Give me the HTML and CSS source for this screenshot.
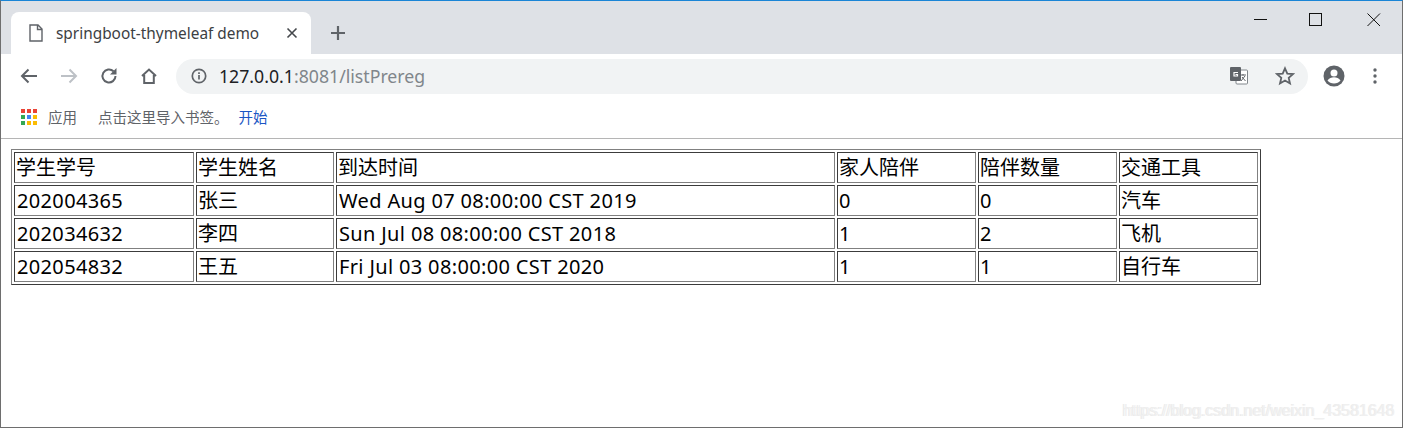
FILE: index.html
```html
<!DOCTYPE html>
<html lang="zh-CN">
<head>
<meta charset="utf-8">
<title>springboot-thymeleaf demo</title>
<link rel="stylesheet" href="styles.css">
</head>
<body>
<div class="window">
  <header class="tabstrip">
    <div class="tab">
      <svg class="tab-icon" width="14" height="18" viewBox="0 0 14 18"><path d="M1 1h8l4 4v12H1z M8.500 1v4.500H13" fill="none" stroke="#5f6368" stroke-width="1.400"/></svg>
      <span class="tab-title">springboot-thymeleaf demo</span>
      <svg class="tab-close" width="12" height="12" viewBox="0 0 12 12"><path d="M1.500 1.500l9 9M10.500 1.500l-9 9" stroke="#45484c" stroke-width="1.600"/></svg>
    </div>
    <svg class="new-tab" width="16" height="16" viewBox="0 0 16 16"><path d="M8 1v14M1 8h14" stroke="#5f6368" stroke-width="2.200"/></svg>
    <div class="win-controls">
      <svg class="win-min" width="14" height="14" viewBox="0 0 14 14"><path d="M0 6.500h13" stroke="#111" stroke-width="1"/></svg>
      <svg class="win-max" width="14" height="14" viewBox="0 0 14 14"><rect x=".5" y=".5" width="12" height="12" fill="none" stroke="#111" stroke-width="1"/></svg>
      <svg width="14" height="14" viewBox="0 0 14 14"><path d="M.5.500l12.500 12.500M13 .5L.5 13" stroke="#111" stroke-width="1"/></svg>
    </div>
  </header>
  <nav class="toolbar">
    <svg class="nav" width="18" height="16" viewBox="0 0 18 16"><path d="M17 8H2M8.500 1.500L2 8l6.500 6.500" fill="none" stroke="#5f6368" stroke-width="2"/></svg>
    <svg class="nav" width="18" height="16" viewBox="0 0 18 16"><path d="M1 8h15M9.500 1.500L16 8l-6.500 6.500" fill="none" stroke="#bdc1c6" stroke-width="2"/></svg>
    <svg class="nav" width="18" height="18" viewBox="0 0 18 18"><path d="M15.500 9a6.500 6.500 0 1 1-2-4.700" fill="none" stroke="#5f6368" stroke-width="2"/><path d="M16.500 1v6.500H10z" fill="#5f6368"/></svg>
    <svg class="nav" width="18" height="18" viewBox="0 0 18 18"><path d="M2 9l7-6.500L16 9M4.200 8v8h9.600V8" fill="none" stroke="#5f6368" stroke-width="2"/></svg>
    <div class="omnibox">
      <svg class="info" width="16" height="16" viewBox="0 0 16 16"><circle cx="8" cy="8" r="6.700" fill="none" stroke="#5f6368" stroke-width="1.700"/><path d="M8 7v4.500M8 4.300v1.700" stroke="#5f6368" stroke-width="1.700"/></svg>
      <span class="url"><span class="host">127.0.0.1</span>:8081/listPrereg</span>
      <svg class="translate" width="20" height="20" viewBox="0 0 20 20"><rect x="7" y="4" width="11.500" height="14" rx="1" fill="#fff" stroke="#80868b"/><rect x="1" y="1" width="11" height="14" rx="1" fill="#5f6368"/><path d="M9 6.500H5v3.500h3.500v-1.500H6.500" fill="none" stroke="#fff" stroke-width="1.200"/><path d="M11 9h6M14 8v1.500M12 15l4-5M13 11l3.500 4" fill="none" stroke="#5f6368"/></svg>
      <svg class="star" width="20" height="20" viewBox="0 0 20 20"><path d="M10 2.300l2.300 5.300 5.700.5-4.300 3.800 1.300 5.600-5-3-5 3 1.300-5.600L2 8.100l5.700-.5z" fill="none" stroke="#5f6368" stroke-width="1.800"/></svg>
    </div>
    <svg class="avatar" width="22" height="22" viewBox="0 0 22 22"><circle cx="11" cy="11" r="10.500" fill="#5f6368"/><circle cx="11" cy="8" r="3.500" fill="#fff"/><path d="M4.500 15.500c1.500-2.500 4-3.200 6.500-3.200s5 .7 6.500 3.200c-1.500 2-3.800 3-6.500 3s-5-1-6.500-3z" fill="#fff"/></svg>
    <svg class="menu" width="4" height="16" viewBox="0 0 4 16"><circle cx="2" cy="2" r="1.700" fill="#5f6368"/><circle cx="2" cy="8" r="1.700" fill="#5f6368"/><circle cx="2" cy="14" r="1.700" fill="#5f6368"/></svg>
  </nav>
  <div class="bookmarks">
    <svg class="apps" width="18" height="18" viewBox="0 0 18 18">
      <rect x="1" y="1" width="4" height="4" fill="#ea4335"/><rect x="7" y="1" width="4" height="4" fill="#ea4335"/><rect x="13" y="1" width="4" height="4" fill="#ea4335"/>
      <rect x="1" y="7" width="4" height="4" fill="#34a853"/><rect x="7" y="7" width="4" height="4" fill="#4285f4"/><rect x="13" y="7" width="4" height="4" fill="#fbbc04"/>
      <rect x="1" y="13" width="4" height="4" fill="#34a853"/><rect x="7" y="13" width="4" height="4" fill="#fbbc04"/><rect x="13" y="13" width="4" height="4" fill="#fbbc04"/>
    </svg>
    <span class="bm bm-apps">应用</span>
    <span class="bm bm-hint">点击这里导入书签。</span>
    <span class="bm bm-link">开始</span>
  </div>
  <main class="page">
    <table class="data">
      <colgroup>
        <col class="c1"><col class="c2"><col class="c3"><col class="c4"><col class="c5"><col class="c6">
      </colgroup>
      <tr><td>学生学号</td><td>学生姓名</td><td>到达时间</td><td>家人陪伴</td><td>陪伴数量</td><td>交通工具</td></tr>
      <tr><td class="en">202004365</td><td>张三</td><td class="en">Wed Aug 07 08:00:00 CST 2019</td><td>0</td><td>0</td><td>汽车</td></tr>
      <tr><td class="en">202034632</td><td>李四</td><td class="en">Sun Jul 08 08:00:00 CST 2018</td><td>1</td><td>2</td><td>飞机</td></tr>
      <tr><td class="en">202054832</td><td>王五</td><td class="en">Fri Jul 03 08:00:00 CST 2020</td><td>1</td><td>1</td><td>自行车</td></tr>
    </table>
    <div class="watermark">https://blog.csdn.net/weixin_43581648<span class="wm-ghost">https://blog.csdn.net/weixin_43581646</span></div>
  </main>
</div>
</body>
</html>
```
FILE: styles.css
```css
html, body { margin: 0; padding: 0; background: #fff; }
body { font-family: "Noto Sans", "Noto Sans CJK SC", sans-serif; overflow: hidden; }
.window {
  width: 1403px; height: 428px; box-sizing: border-box;
  border: 1px solid #6e6e6e; border-top: 1px solid #1a85d6;
  display: flex; flex-direction: column; overflow: hidden;
}
.tabstrip {
  height: 53px; background: #dee1e6; display: flex; align-items: flex-end; flex: none;
  padding-left: 10px; position: relative;
}
.tab {
  width: 300px; height: 42px; background: #fff; border-radius: 8px 8px 0 0;
  display: flex; align-items: center; box-sizing: border-box; padding: 0 13px 0 18px;
}
.tab-icon { margin-right: 13px; flex: none; }
.tab-title { font-size: 15.400px; color: #3c4043; flex: 1; white-space: nowrap; font-family: "Noto Sans", sans-serif; }
.tab-close { flex: none; }
.new-tab { margin: 0 0 13px 19px; }
.win-controls {
  position: absolute; right: 21px; top: 12px; display: flex; gap: 44px;
}
.win-min { margin-right: -1px; }
.win-max { margin-left: -2px; }
.toolbar {
  height: 44px; flex: none; display: flex; align-items: center; padding-left: 19px; background: #fff;
}
.nav { margin-right: 22px; flex: none; }
.nav:nth-child(4) { margin-right: 18px; }
.omnibox {
  width: 1132px; height: 35px; border-radius: 18px; background: #f1f3f4; flex: none;
  display: flex; align-items: center; padding: 0 13px 0 15px; box-sizing: border-box;
}
.info { margin-right: 12px; flex: none; }
.url { font-size: 17.700px; color: #80868b; flex: 1; font-family: "Noto Sans", sans-serif; }
.host { color: #202124; }
.translate { margin-right: 26px; }
.avatar { margin-left: 15px; flex: none; }
.menu { margin-left: 28px; flex: none; }
.bookmarks {
  height: 37px; flex: none; display: flex; align-items: center; padding: 0 0 3px 19px;
  border-bottom: 1px solid #b5b5b5; box-sizing: content-box; background: #fff;
}
.bm { font-size: 14.500px; font-family: "Noto Sans CJK SC", sans-serif; }
.bm-apps { color: #5f6368; margin-left: 10px; }
.bm-hint { color: #5f6368; margin-left: 21px; }
.bm-link { color: #1a56c4; margin-left: 10px; }
.page { flex: 1; padding: 10px; position: relative; }
.data {
  width: 1250px; table-layout: fixed; border-collapse: separate; border-spacing: 2px;
  border: 1px solid; border-color: #808080 #3c3c3c #3c3c3c #808080;
  font-size: 20px; color: #000; line-height: 27px;
}
.data td {
  padding: 1px; border: 1px solid; border-color: #3c3c3c #808080 #808080 #3c3c3c;
  white-space: nowrap;
}
.data td.en { letter-spacing: .35px; padding-left: 2px; }
.c1 { width: 180px; } .c2 { width: 138px; } .c3 { width: 499px; }
.c4 { width: 139px; } .c5 { width: 139px; } .c6 { width: 139px; }
.watermark {
  position: absolute; right: 8px; bottom: 7px; font-size: 16px; color: #ececec;
  font-family: "Liberation Sans", sans-serif; white-space: nowrap;
}
.wm-ghost { position: absolute; right: -1px; top: 0; letter-spacing: -.03px; color: #f0f0f0; }
```
